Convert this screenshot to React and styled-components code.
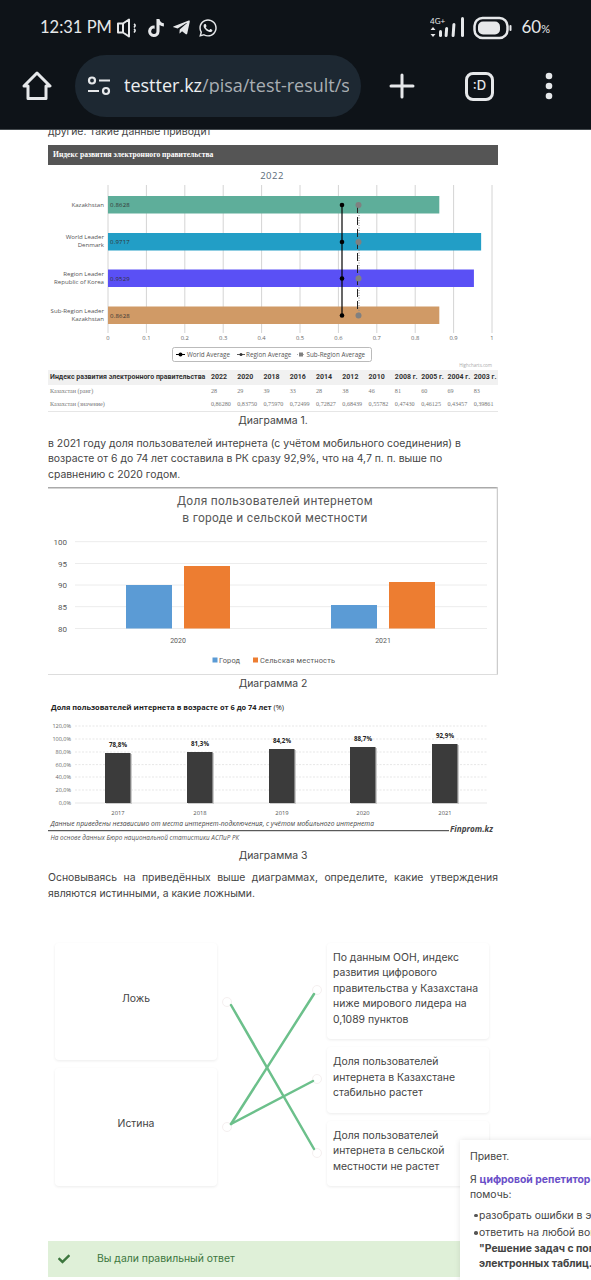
import React from 'react';
import styled, { createGlobalStyle } from 'styled-components';
import { FaTiktok, FaTelegramPlane, FaWhatsapp, FaCheck } from 'react-icons/fa';

const Global = createGlobalStyle`
  html, body {
    margin: 0;
    background: #fff;
    overflow: hidden;
  }
  * {
    box-sizing: border-box;
  }
`;

const Page = styled.div`
  color: #444;
  font-family: Inter, "Noto Sans", sans-serif;
  font-size: 10.4px;
  height: 1280px;
  line-height: 15.5px;
  overflow: hidden;
  position: relative;
  width: 591px;
`;

const Header = styled.header`
  background: #0e1318;
  border-bottom: 1px solid #444a4e;
  color: #e6e8ea;
  height: 130px;
  position: relative;
  z-index: 2;
`;

const StatusBar = styled.div`
  align-items: center;
  display: flex;
  height: 55px;
  justify-content: space-between;
  padding: 0 41px 0 40px;
`;

const StatusGroup = styled.div`
  align-items: center;
  display: flex;
  gap: ${(p) => p.$gap || 0}px;
`;

const Time = styled.span`
  font-family: Lato, sans-serif;
  font-size: 16.5px;
  margin-right: -3px;
`;

const Battery = styled.span`
  font-family: Lato, sans-serif;
  font-size: 17px;
  margin-left: 2px;
  & small {
    font-size: 11px;
  }
`;

const Toolbar = styled.div`
  align-items: center;
  display: flex;
  height: 62px;
  padding-left: 22px;
`;

const AddressPill = styled.div`
  align-items: center;
  background: #1d2832;
  border-radius: 31px;
  display: flex;
  gap: 13px;
  height: 62px;
  margin-left: 23px;
  padding: 0 12px;
  width: 286px;
`;

const Url = styled.div`
  color: #a9aeb3;
  font-family: "Open Sans", sans-serif;
  font-size: 18px;
  overflow: hidden;
  white-space: nowrap;
  width: 225px;
  & b {
    color: #eceef0;
    font-weight: 400;
  }
`;

const ToolIcons = styled.div`
  align-items: center;
  display: flex;
  gap: 50px;
  margin-left: 28px;
`;

const TabBox = styled.div`
  align-items: center;
  border: 3px solid #e6e8ea;
  border-radius: 8px;
  display: flex;
  font-size: 13px;
  font-weight: 500;
  height: 29px;
  justify-content: center;
  width: 29px;
`;

const Content = styled.main`
  margin-top: -6px;
  padding-left: 48px;
  width: 498px;
`;

const Text = styled.p`
  margin: ${(p) => p.$margin || 0};
  text-align: ${(p) => (p.$justify ? 'justify' : 'left')};
`;

const Caption = styled.div`
  margin-top: ${(p) => p.$top || 0}px;
  text-align: center;
`;

const BarTitle = styled.div`
  background: #555;
  color: #fff;
  font-family: "Liberation Serif", serif;
  font-size: 7.6px;
  font-weight: 700;
  height: 20px;
  line-height: 20px;
  margin-top: 5px;
  padding-left: 5px;
`;

const ChartSvg = styled.svg`
  display: block;
  margin-top: ${(p) => p.$top || 0}px;
  overflow: hidden;
`;

const DataTable = styled.table`
  border-bottom: 1px solid #e6e6e6;
  border-collapse: collapse;
  table-layout: fixed;
  width: 450px;
  & th {
    background: #f1f1f1;
    color: #333;
    font-family: Roboto, sans-serif;
    font-size: 7px;
    height: 15px;
    line-height: 1;
    padding: 0 0 0 2px;
    text-align: left;
    white-space: nowrap;
  }
  & td {
    color: #777;
    font-family: "Liberation Serif", serif;
    font-size: 6.1px;
    height: 13.5px;
    line-height: 1;
    padding: 0 0 0 2px;
    white-space: nowrap;
  }
  & th:first-child, & td:first-child {
    width: 161px;
  }
`;

const Match = styled.section`
  display: grid;
  gap: 110px;
  grid-template-columns: 162px 162px;
  margin: 41.5px 0 0 7px;
  position: relative;
  width: 434px;
`;

const MatchColumn = styled.div`
  display: flex;
  flex-direction: column;
  gap: 8px;
`;

const MatchCard = styled.div`
  background: #fff;
  border-radius: 4px;
  box-shadow: 0 1px 3px rgba(0, 0, 0, 0.08);
  flex: ${(p) => (p.$center ? 1 : 'none')};
  height: ${(p) => (p.$center ? '117.5px' : 'auto')};
  padding: ${(p) => (p.$center ? '48px 6px' : '7px 6px 12px')};
  text-align: ${(p) => (p.$center ? 'center' : 'left')};
`;

const Wires = styled.svg`
  height: 243px;
  left: 0;
  pointer-events: none;
  position: absolute;
  top: 0;
  width: 434px;
`;

const Alert = styled.div`
  align-items: center;
  background: #dff0d8;
  color: #3c763d;
  display: flex;
  gap: 27px;
  height: 36px;
  margin-top: 55px;
  padding-left: 10px;
`;

const Popup = styled.aside`
  background: #fff;
  box-shadow: 0 0 6px rgba(0, 0, 0, 0.1);
  left: 460px;
  padding: 9px 0 0 10px;
  position: absolute;
  top: 1140px;
  white-space: nowrap;
  width: 320px;
  height: 150px;
  z-index: 1;
`;

const Highlight = styled.b`
  color: #6a4fc8;
`;

const BulletList = styled.ul`
  list-style: none;
  margin: 5px 0 0;
  padding: 0;
`;

const Bullet = styled.li`
  margin-bottom: 2px;
  padding-left: 9px;
  position: relative;
  &::before {
    background: #555;
    border-radius: 50%;
    content: '';
    height: 3.5px;
    left: 4px;
    position: absolute;
    top: 6px;
    width: 3.5px;
  }
`;

const SpeakerIcon = () => (
  <svg width="24" height="22" viewBox="0 0 24 22" fill="none" stroke="#e6e8ea" strokeWidth="2">
    <path d="M2 6.5h5v9H2zM7 6.5l6-4v17l-6-4" strokeLinejoin="round" />
    <path d="M7 6.5v9" />
    <path d="M18 7c1.5 1 1.5 2 0 3.5M18 12c1.5 1 1.500 2 0 3.500" strokeWidth="1.600" />
  </svg>
);

const SignalIcon = () => (
  <svg width="36" height="24" viewBox="0 0 36 24" fill="#e6e8ea">
    <text x="0" y="8" fontSize="8" fontFamily="Lato, sans-serif" fill="#e6e8ea">4G+</text>
    <path d="M3 11l2.500 3h-5zM3 21l2.500-3h-5z" />
    <rect x="9" y="14" width="3" height="7" rx="1.500" />
    <rect x="16" y="11" width="3" height="10" rx="1.500" transform="skewX(-4)" />
    <rect x="23" y="7" width="3" height="14" rx="1.500" transform="skewX(-4)" />
    <rect x="31" y="1" width="3" height="20" rx="1.500" />
  </svg>
);

const BatteryIcon = () => (
  <svg width="39" height="24" viewBox="0 0 39 24" fill="none">
    <rect x="1.500" y="2" width="33" height="20" rx="8" stroke="#e6e8ea" strokeWidth="2.500" />
    <rect x="5" y="5.500" width="22" height="13" rx="5" fill="#e6e8ea" />
    <rect x="36.500" y="9" width="2" height="6" rx="1" fill="#e6e8ea" />
  </svg>
);

const HomeIcon = () => (
  <svg width="30" height="30" viewBox="0 0 30 30" fill="none" stroke="#e6e8ea" strokeWidth="3" strokeLinejoin="round">
    <path d="M2 15L15 2l13 13h-4v12.500H6V15z" />
  </svg>
);

const SlidersIcon = () => (
  <svg width="24" height="20" viewBox="0 0 24 20" fill="none" stroke="#e6e8ea" strokeWidth="2.200">
    <circle cx="5" cy="4.500" r="3" />
    <path d="M12 4.500h11M1 15h11" />
    <circle cx="19" cy="15" r="3" />
  </svg>
);

const PlusIcon = () => (
  <svg width="26" height="26" viewBox="0 0 26 26" stroke="#e6e8ea" strokeWidth="3" strokeLinecap="round">
    <path d="M13 2v22M2 13h22" />
  </svg>
);

const DotsIcon = () => (
  <svg width="10" height="28" viewBox="0 0 10 28" fill="#e6e8ea">
    <circle cx="5" cy="4" r="3.300" />
    <circle cx="5" cy="14" r="3.300" />
    <circle cx="5" cy="24" r="3.300" />
  </svg>
);

const indexBars = [
  { label: ['Kazakhstan'], value: 0.8628, y: 196, color: '#5eae9a' },
  { label: ['World Leader', 'Denmark'], value: 0.9717, y: 233, color: '#229ec6' },
  { label: ['Region Leader', 'Republic of Korea'], value: 0.9529, y: 269.500, color: '#5a50f5' },
  { label: ['Sub-Region Leader', 'Kazakhstan'], value: 0.8628, y: 306.500, color: '#d09a66' },
];

const IndexChart = () => {
  const ticks = [0, 0.1, 0.2, 0.3, 0.4, 0.5, 0.6, 0.7, 0.8, 0.9, 1];
  const toX = (v) => 108 + v * 384;
  return (
    <ChartSvg width="450" height="205" viewBox="48 165 450 205" fontFamily="'Open Sans', sans-serif">
      <text x="272" y="178.500" fontSize="9.500" fill="#5a6b7a" textAnchor="middle" letterSpacing="0.5">2022</text>
      {ticks.map((t) => (
        <g key={t}>
          <line x1={toX(t)} x2={toX(t)} y1="185" y2="333" stroke="#d4d4d4" strokeWidth="1" />
          <text x={toX(t)} y="340" fontSize="5.800" fill="#666" textAnchor="middle">{t}</text>
        </g>
      ))}
      {indexBars.map((b) => (
        <g key={b.y}>
          <rect x="108" y={b.y} width={b.value * 384} height="17.500" fill={b.color} />
          <text x="110" y={b.y + 11} fontSize="6" fill="#333" letterSpacing="0.2">{String(b.value)}</text>
          {b.label.map((line, i) => (
            <text
              key={line}
              x="104"
              y={b.y + (b.label.length === 1 ? 11 : 6 + i * 8)}
              fontSize="6.100"
              fill="#555"
              textAnchor="end"
            >
              {line}
            </text>
          ))}
          <circle cx="342" cy={b.y + 9} r="2.300" fill="#000" />
        </g>
      ))}
      <line x1="342" x2="342" y1="205" y2="315" stroke="#000" strokeWidth="1.200" />
      <line x1="357.500" x2="357.500" y1="205" y2="315" stroke="#222" strokeWidth="1" strokeDasharray="8 4" />
      <line x1="359" x2="359" y1="205" y2="315" stroke="#888" strokeWidth="1" strokeDasharray="1 1.500" />
      {indexBars.map((b) => (
        <rect key={b.label.join()} x="355.500" y={b.y + 6} width="6" height="6" rx="3" fill="#808080" />
      ))}
      <rect x="172.500" y="347.500" width="199" height="14" rx="2" fill="#fff" stroke="#aaa" strokeWidth="0.800" />
      <line x1="176" x2="185" y1="354.500" y2="354.500" stroke="#000" strokeWidth="1" />
      <circle cx="180.500" cy="354.500" r="2" fill="#000" />
      <text x="187" y="357" fontSize="6.300" fill="#555">World Average</text>
      <line x1="237" x2="245" y1="354.500" y2="354.500" stroke="#333" strokeWidth="0.800" />
      <circle cx="241" cy="354.500" r="1.500" fill="#333" />
      <text x="246" y="357" fontSize="6.300" fill="#555">Region Average</text>
      <line x1="297" x2="305" y1="354.500" y2="354.500" stroke="#999" strokeWidth="0.800" strokeDasharray="1 1" />
      <rect x="299" y="352.500" width="4" height="4" fill="#808080" />
      <text x="306.500" y="357" fontSize="6.300" fill="#555">Sub-Region Average</text>
      <text x="492" y="367" fontSize="4.500" fill="#aaa" textAnchor="end">Highcharts.com</text>
    </ChartSvg>
  );
};

const years = ['2022', '2020', '2018', '2016', '2014', '2012', '2010', '2008 г.', '2005 г.', '2004 г.', '2003 г.'];
const ranks = ['28', '29', '39', '33', '28', '38', '46', '81', '60', '69', '83'];
const scores = ['0,86280', '0,83750', '0,75970', '0,72499', '0,72827', '0,68439', '0,55782', '0,47430', '0,46125', '0,43457', '0,39861'];

const IndexTable = () => (
  <DataTable>
    <thead>
      <tr>
        <th>Индекс развития электронного правительства</th>
        {years.map((y) => <th key={y}>{y}</th>)}
      </tr>
    </thead>
    <tbody>
      <tr>
        <td>Казахстан (ранг)</td>
        {ranks.map((r, i) => <td key={i}>{r}</td>)}
      </tr>
      <tr>
        <td>Казахстан (значение)</td>
        {scores.map((s) => <td key={s}>{s}</td>)}
      </tr>
    </tbody>
  </DataTable>
);

const areaBars = [
  { x: 126, top: 585, color: '#5b9bd5' },
  { x: 184, top: 566, color: '#ed7d31' },
  { x: 331, top: 605, color: '#5b9bd5' },
  { x: 389, top: 582, color: '#ed7d31' },
];

const AreaChart = () => {
  const grid = [[100, 541.700], [95, 563.500], [90, 585], [85, 606.700], [80, 628.500]];
  return (
    <ChartSvg width="450" height="188" viewBox="48 487 450 188" fontFamily="Roboto, sans-serif" $top={5}>
      <line x1="48" x2="498" y1="487.800" y2="487.800" stroke="#aaa" strokeWidth="1.500" />
      <line x1="497.500" x2="497.500" y1="487" y2="675" stroke="#ccc" strokeWidth="1.500" />
      <line x1="48" x2="498" y1="674.500" y2="674.500" stroke="#ddd" strokeWidth="1" />
      <text x="275" y="505" fontSize="12" fill="#595959" textAnchor="middle" letterSpacing="0.3">Доля пользователей интернетом</text>
      <text x="275" y="522" fontSize="12" fill="#595959" textAnchor="middle" letterSpacing="0.3">в городе и сельской местности</text>
      {grid.map(([v, y]) => (
        <g key={v}>
          <line x1="75" x2="487" y1={y} y2={y} stroke="#ececec" strokeWidth="1" />
          <text x="67" y={y + 3} fontSize="8" fill="#595959" textAnchor="end">{v}</text>
        </g>
      ))}
      {areaBars.map((b) => (
        <rect key={b.x} x={b.x} y={b.top} width="46" height={628.500 - b.top} fill={b.color} />
      ))}
      <text x="178" y="643" fontSize="7" fill="#595959" textAnchor="middle">2020</text>
      <text x="383" y="643" fontSize="7" fill="#595959" textAnchor="middle">2021</text>
      <rect x="212.500" y="657.500" width="5" height="5" fill="#5b9bd5" />
      <text x="219" y="663" fontSize="7.400" fill="#595959" letterSpacing="0.2">Город</text>
      <rect x="253" y="657.500" width="5" height="5" fill="#ed7d31" />
      <text x="260" y="663" fontSize="7.400" fill="#595959" letterSpacing="0.2">Сельская местность</text>
    </ChartSvg>
  );
};

const usersBars = [
  { year: '2017', label: '78,8%', x: 105, top: 753 },
  { year: '2018', label: '81,3%', x: 187, top: 752 },
  { year: '2019', label: '84,2%', x: 269, top: 749 },
  { year: '2020', label: '88,7%', x: 350, top: 747 },
  { year: '2021', label: '92,9%', x: 432, top: 744 },
];

const UsersChart = () => {
  const grid = [['120,0%', 726], ['100,0%', 739], ['80,0%', 752], ['60,0%', 764.600], ['40,0%', 777], ['20,0%', 790], ['0,0%', 803]];
  return (
    <ChartSvg width="450" height="152" viewBox="48 695 450 152" fontFamily="'Open Sans', sans-serif" $top={3}>
      <text x="51" y="710" fontSize="7.400" fontWeight="700" fill="#222">
        Доля пользователей интернета в возрасте от 6 до 74 лет <tspan fontWeight="400">(%)</tspan>
      </text>
      {grid.map(([v, y]) => (
        <g key={v}>
          <line x1="75" x2="487" y1={y} y2={y} stroke="#ddd" strokeWidth="0.700" strokeDasharray={v === '0,0%' ? '' : '2 1.500'} />
          <text x="71" y={y + 2} fontSize="5.500" fill="#666" textAnchor="end">{v}</text>
        </g>
      ))}
      {usersBars.map((b) => (
        <g key={b.year}>
          <rect x={b.x + 1} y={b.top + 1} width="26" height={803 - b.top} fill="#ccc" />
          <rect x={b.x} y={b.top} width="25.500" height={803 - b.top} fill="#3b3b3b" />
          <text x={b.x + 13} y={b.top - 6} fontSize="6.200" fontWeight="700" fill="#222" textAnchor="middle">{b.label}</text>
          <text x={b.x + 13} y="815" fontSize="5.800" fill="#555" textAnchor="middle">{b.year}</text>
        </g>
      ))}
      <text x="50.500" y="826" fontSize="6.700" fontStyle="italic" fill="#444">Данные приведены независимо от места интернет-подключения, с учётом мобильного интернета</text>
      <line x1="48" x2="449" y1="830.700" y2="830.700" stroke="#333" strokeWidth="1" />
      <text x="450" y="832" fontSize="8.200" fontStyle="italic" fontWeight="700" fill="#444">Finprom.kz</text>
      <text x="50.500" y="840" fontSize="6.400" fontStyle="italic" fill="#555">На основе данных Бюро национальной статистики АСПиР РК</text>
    </ChartSvg>
  );
};

const MatchWires = () => (
  <Wires viewBox="0 0 434 243">
    {[[172, 59], [172, 184], [262, 47], [262, 136], [262, 210]].map(([cx, cy]) => (
      <circle key={cy} cx={cx} cy={cy} r="4.500" fill="#fff" stroke="#f5f0f0" strokeWidth="1" />
    ))}
    <g stroke="#6cc08b" strokeWidth="2.500" strokeLinecap="round">
      <line x1="176" y1="62" x2="259" y2="206" />
      <line x1="176" y1="181" x2="259" y2="51" />
      <line x1="176" y1="181" x2="258" y2="138" />
    </g>
  </Wires>
);

const App = () => (
  <Page>
    <Global />
    <Header>
      <StatusBar>
        <StatusGroup $gap={7}>
          <Time>12:31 PM</Time>
          <SpeakerIcon />
          <FaTiktok size={18} />
          <FaTelegramPlane size={19} />
          <FaWhatsapp size={20} />
        </StatusGroup>
        <StatusGroup $gap={7}>
          <SignalIcon />
          <BatteryIcon />
          <Battery>60<small>%</small></Battery>
        </StatusGroup>
      </StatusBar>
      <Toolbar>
        <HomeIcon />
        <AddressPill>
          <SlidersIcon />
          <Url><b>testter.kz</b>/pisa/test-result/s</Url>
        </AddressPill>
        <ToolIcons>
          <PlusIcon />
          <TabBox>:D</TabBox>
          <DotsIcon />
        </ToolIcons>
      </Toolbar>
    </Header>
    <Content>
      <Text>другие. Такие данные приводит</Text>
      <BarTitle>Индекс развития электронного правительства</BarTitle>
      <IndexChart />
      <IndexTable />
      <Caption $top={1}>Диаграмма 1.</Caption>
      <Text $margin="7px 0 0">
        в 2021 году доля пользователей интернета (с учётом мобильного соединения) в<br />
        возрасте от 6 до 74 лет составила в РК сразу 92,9%, что на 4,7 п. п. выше по<br />
        сравнению с 2020 годом.
      </Text>
      <AreaChart />
      <Caption $top={1}>Диаграмма 2</Caption>
      <UsersChart />
      <Caption $top={1}>Диаграмма 3</Caption>
      <Text $margin="7px 0 0" $justify>
        Основываясь на приведённых выше диаграммах, определите, какие утверждения являются истинными, а какие ложными.
      </Text>
      <Match>
        <MatchColumn>
          <MatchCard $center>Ложь</MatchCard>
          <MatchCard $center>Истина</MatchCard>
        </MatchColumn>
        <MatchColumn>
          <MatchCard>По данным ООН, индекс развития цифрового правительства у Казахстана ниже мирового лидера на 0,1089 пунктов</MatchCard>
          <MatchCard>Доля пользователей интернета в Казахстане стабильно растет</MatchCard>
          <MatchCard>Доля пользователей интернета в сельской местности не растет</MatchCard>
        </MatchColumn>
        <MatchWires />
      </Match>
      <Alert>
        <FaCheck size={12} />
        Вы дали правильный ответ
      </Alert>
    </Content>
    <Popup>
      <div>Привет.</div>
      <Text $margin="7px 0 0">Я <Highlight>цифровой репетитор</Highlight> и готов вам<br />помочь:</Text>
      <BulletList>
        <Bullet>разобрать ошибки в этом тесте</Bullet>
        <Bullet>
          ответить на любой вопрос по теме<br />
          <b>"Решение задач с помощью</b><br />
          <b>электронных таблиц."</b>
        </Bullet>
      </BulletList>
    </Popup>
  </Page>
);

export default App;
